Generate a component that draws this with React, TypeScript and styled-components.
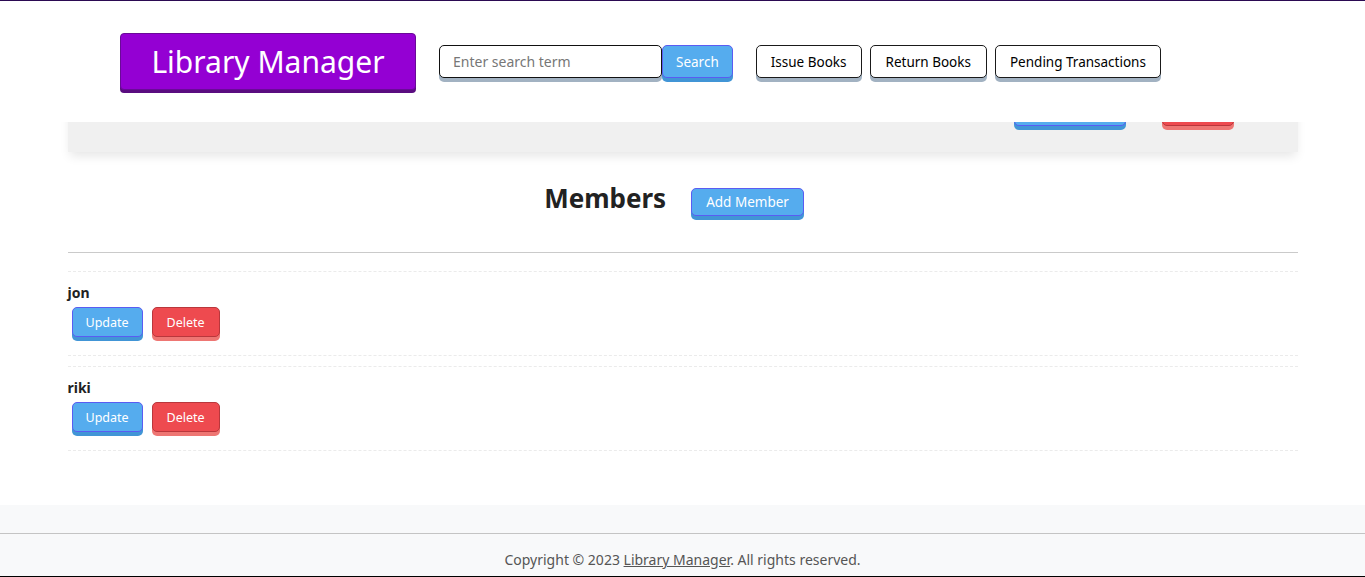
import React from "react";
import styled, { createGlobalStyle } from "styled-components";

const GlobalStyle = createGlobalStyle`
  html, body { margin: 0; padding: 0; background: #ffffff; }
  body { font-family: "Noto Sans", "Open Sans", sans-serif; color: #222; }
  * { box-sizing: border-box; }
`;

const Page = styled.div`
  min-height: 577px;
  border-top: 1px solid #2b0a52;
  border-bottom: 1px solid #000;
  display: flex;
  flex-direction: column;
`;

const Header = styled.header`
  position: relative;
  z-index: 2;
  height: 121px;
  background: #fff;
  display: flex;
  align-items: center;
  padding-left: 120px;
`;

const Logo = styled.div`
  width: 296px;
  height: 57px;
  background: #9400d3;
  border: 1px solid #6a0a98;
  border-radius: 4px;
  box-shadow: 0 3px 0 #5a0d80;
  color: #fff;
  font-size: 30px;
  display: flex;
  align-items: center;
  justify-content: center;
  margin-right: 23px;
`;

const SearchForm = styled.form`
  display: flex;
  margin: 0 23px 0 0;
`;

const SearchInput = styled.input`
  width: 223px;
  height: 33px;
  border: 1px solid #111;
  border-radius: 5px;
  box-shadow: 0 4px 0 #a2b2c2;
  padding: 0 13px;
  font-family: inherit;
  font-size: 14px;
  outline: none;
  &::placeholder { color: #777; }
`;

type Tone = "blue" | "red" | "white";

const tones: Record<Tone, { bg: string; border: string; shadow: string; color: string }> = {
  blue: { bg: "#55acee", border: "#5a5cf2", shadow: "#4195d6", color: "#fff" },
  red: { bg: "#ee4a4f", border: "#b9373c", shadow: "#ee7673", color: "#fff" },
  white: { bg: "#fff", border: "#1a1a1a", shadow: "#a2b2c2", color: "#000" },
};

const Button = styled.button<{ $tone: Tone; $h?: number; $fs?: number; $px?: number }>`
  height: ${(p) => p.$h ?? 33}px;
  padding: 0 ${(p) => p.$px ?? 14}px;
  background: ${(p) => tones[p.$tone].bg};
  color: ${(p) => tones[p.$tone].color};
  border: 1px solid ${(p) => tones[p.$tone].border};
  border-radius: 5px;
  box-shadow: 0 4px 0 ${(p) => tones[p.$tone].shadow};
  font-family: inherit;
  font-size: ${(p) => p.$fs ?? 13.5}px;
  white-space: nowrap;
  cursor: pointer;
  display: inline-flex;
  align-items: center;
  justify-content: center;
`;

const Nav = styled.nav`
  display: flex;
  gap: 8px;
`;

const Container = styled.main`
  width: 1230px;
  margin: 0 auto;
  flex: 1;
  padding-bottom: 54px;
`;

const BooksCard = styled.section`
  position: relative;
  z-index: 1;
  margin-top: -46px;
  background: #f0f0f0;
  box-shadow: 0 6px 10px -2px rgba(0, 0, 0, 0.1);
  padding: 20px 64px 26px 0;
  display: flex;
  justify-content: flex-end;
  gap: 36px;
`;

const CardButton = styled.span<{ $tone: Tone; $w: number }>`
  width: ${(p) => p.$w}px;
  height: 30px;
  background: ${(p) => tones[p.$tone].bg};
  border: 1px solid ${(p) => tones[p.$tone].border};
  border-radius: 5px;
  box-shadow: 0 4px 0 ${(p) => tones[p.$tone].shadow};
`;

const TitleRow = styled.div`
  display: flex;
  justify-content: center;
  align-items: center;
  gap: 25px;
  margin: 34px 0 35px;
  padding-right: 17px;
`;

const Title = styled.h2`
  margin: -3px 0 3px;
  font-size: 26px;
  line-height: 31px;
  font-weight: 700;
  color: #222;
`;

const Rule = styled.hr`
  margin: 0;
  border: none;
  border-top: 1px solid #cacaca;
`;

const MemberList = styled.ul`
  list-style: none;
  margin: 18px 0 0;
  padding: 0;
  display: flex;
  flex-direction: column;
  gap: 10px;
`;

const MemberItem = styled.li`
  border-top: 1px dashed #ebebeb;
  border-bottom: 1px dashed #ebebeb;
  padding: 11px 0 18px;
`;

const MemberName = styled.div`
  font-weight: 700;
  font-size: 14px;
  line-height: 20px;
  color: #222;
`;

const Actions = styled.div`
  display: flex;
  gap: 9px;
  margin: 4px 0 0 4px;
`;

const Footer = styled.footer`
  background: #f8f9fa;
  padding: 28px 0 6px;
`;

const FooterRule = styled.hr`
  margin: 0 0 16px;
  border: none;
  border-top: 1px solid #c4c4c4;
`;

const FooterText = styled.p`
  margin: 0;
  text-align: center;
  font-size: 14px;
  line-height: 20px;
  color: #555;
`;

const FooterLink = styled.a`
  color: #555;
  text-decoration: underline;
`;

const members = ["jon", "riki"];

export default function App() {
  return (
    <>
      <GlobalStyle />
      <Page>
        <Header>
          <Logo>Library Manager</Logo>
          <SearchForm onSubmit={(e) => e.preventDefault()}>
            <SearchInput placeholder="Enter search term" />
            <Button $tone="blue" $px={13} type="submit">Search</Button>
          </SearchForm>
          <Nav>
            <Button $tone="white">Issue Books</Button>
            <Button $tone="white" $px={15}>Return Books</Button>
            <Button $tone="white">Pending Transactions</Button>
          </Nav>
        </Header>
        <Container>
          <BooksCard>
            <CardButton $tone="blue" $w={112} />
            <CardButton $tone="red" $w={72} />
          </BooksCard>
          <TitleRow>
            <Title>Members</Title>
            <Button $tone="blue" $h={28}>Add Member</Button>
          </TitleRow>
          <Rule />
          <MemberList>
            {members.map((m) => (
              <MemberItem key={m}>
                <MemberName>{m}</MemberName>
                <Actions>
                  <Button $tone="blue" $h={30} $fs={12.5} $px={13}>Update</Button>
                  <Button $tone="red" $h={30} $fs={12.5} $px={14}>Delete</Button>
                </Actions>
              </MemberItem>
            ))}
          </MemberList>
        </Container>
        <Footer>
          <FooterRule />
          <FooterText>
            Copyright © 2023 <FooterLink href="#">Library Manager</FooterLink>. All rights reserved.
          </FooterText>
        </Footer>
      </Page>
    </>
  );
}
